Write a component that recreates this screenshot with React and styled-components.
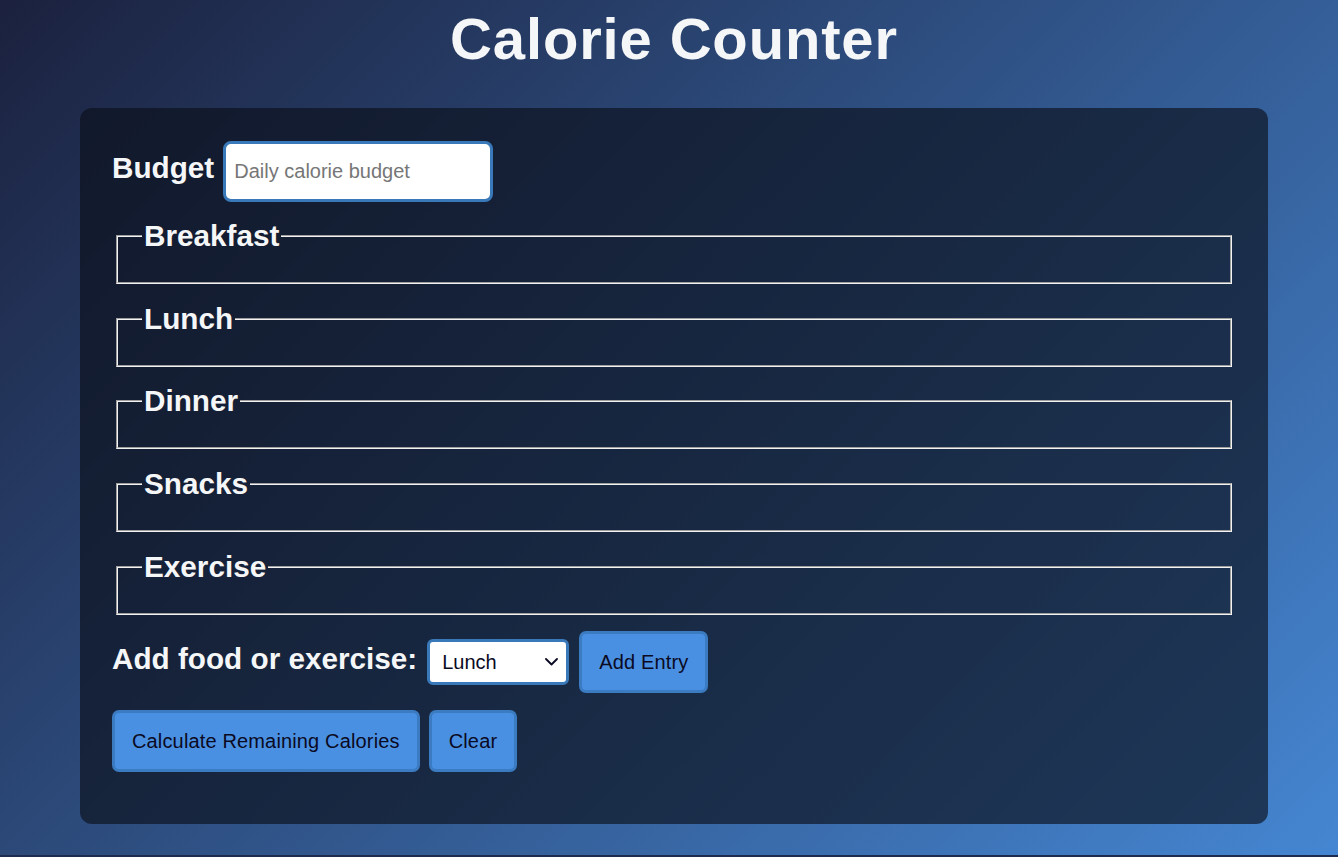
import React from 'react';
import styled, { createGlobalStyle } from 'styled-components';

const GlobalStyle = createGlobalStyle`
  html {
    background: #1c2b4e;
  }

  body {
    margin: 0;
    height: 855px;
    background: linear-gradient(135deg, #1b213e 0%, #4586d2 100%);
    font-family: "Liberation Sans", Arial, sans-serif;
    color: #f5f6f7;
  }
`;

const Title = styled.h1`
  margin: 5px 0 36px;
  padding-left: 10px;
  text-align: center;
  font-size: 58px;
  letter-spacing: 0.85px;
  font-weight: bold;
  color: #f5f6f7;
`;

const Card = styled.main`
  width: 1188px;
  box-sizing: border-box;
  margin-left: 80px;
  padding: 33px 32px 52px;
  border-radius: 12px;
  background: rgba(10, 16, 26, 0.65);
  display: flex;
  flex-direction: column;
`;

const Row = styled.div`
  display: flex;
  align-items: baseline;
  gap: ${(p) => p.$gap || 10}px;
  margin-top: ${(p) => p.$top || 0}px;
`;

const Label = styled.label`
  font-size: 29.7px;
  font-weight: bold;
  color: #f5f6f7;
`;

const BudgetInput = styled.input`
  width: 270px;
  height: 61px;
  box-sizing: border-box;
  padding: 0 8px;
  font-family: "Liberation Sans", Arial, sans-serif;
  font-size: 20px;
  color: #0a0a23;
  background: #fff;
  border: 3px solid #3a79b9;
  border-radius: 8px;
  outline: none;

  &::placeholder {
    color: #767676;
  }
`;

const Meal = styled.fieldset`
  margin: ${(p) => p.$top}px 4px 0;
  padding: 5px 24px 24px;
  border: 2px groove #f2f2f2;
  min-width: 0;
`;

const Legend = styled.legend`
  padding: 0 2px;
  font-size: 29.7px;
  font-weight: bold;
  color: #f5f6f7;
`;

const SelectWrap = styled.span`
  position: relative;
  display: inline-flex;
`;

const Select = styled.select`
  width: 142px;
  height: 46px;
  box-sizing: border-box;
  padding: 0 30px 0 12px;
  appearance: none;
  font-family: "Liberation Sans", Arial, sans-serif;
  font-size: 20px;
  color: #0a0a23;
  background: #fff;
  border: 3px solid #3a79b9;
  border-radius: 6px;
`;

const Chevron = styled.svg`
  position: absolute;
  right: 11px;
  top: 19px;
  width: 13px;
  height: 8px;
  pointer-events: none;
`;

const Button = styled.button`
  padding: 16px 17px;
  font-family: "Liberation Sans", Arial, sans-serif;
  font-size: 20px;
  line-height: 24px;
  letter-spacing: 0.15px;
  color: #0a0a23;
  background: #4a90e2;
  border: 3px solid #3b7bc2;
  border-radius: 7px;
  cursor: pointer;
`;

const meals = ['Breakfast', 'Lunch', 'Dinner', 'Snacks', 'Exercise'];

export default function App() {
  return (
    <>
      <GlobalStyle />
      <Title>Calorie Counter</Title>
      <Card>
        <Row $gap={9}>
          <Label htmlFor="budget">Budget</Label>
          <BudgetInput id="budget" type="number" placeholder="Daily calorie budget" />
        </Row>
        {meals.map((m, i) => (
          <Meal key={m} $top={i === 0 ? 17 : 17.7}>
            <Legend>{m}</Legend>
          </Meal>
        ))}
        <Row $top={16}>
          <Label htmlFor="entry-dropdown">Add food or exercise:</Label>
          <SelectWrap>
            <Select id="entry-dropdown" defaultValue="lunch">
              <option value="breakfast">Breakfast</option>
              <option value="lunch">Lunch</option>
              <option value="dinner">Dinner</option>
              <option value="snacks">Snacks</option>
              <option value="exercise">Exercise</option>
            </Select>
            <Chevron viewBox="0 0 13 8" fill="none" stroke="#0a0a23" strokeWidth="1.8" strokeLinecap="round" strokeLinejoin="round">
              <polyline points="1,1 6.5,6.5 12,1" />
            </Chevron>
          </SelectWrap>
          <Button type="button">Add Entry</Button>
        </Row>
        <Row $gap={9} $top={17}>
          <Button type="button">Calculate Remaining Calories</Button>
          <Button type="button">Clear</Button>
        </Row>
      </Card>
    </>
  );
}
